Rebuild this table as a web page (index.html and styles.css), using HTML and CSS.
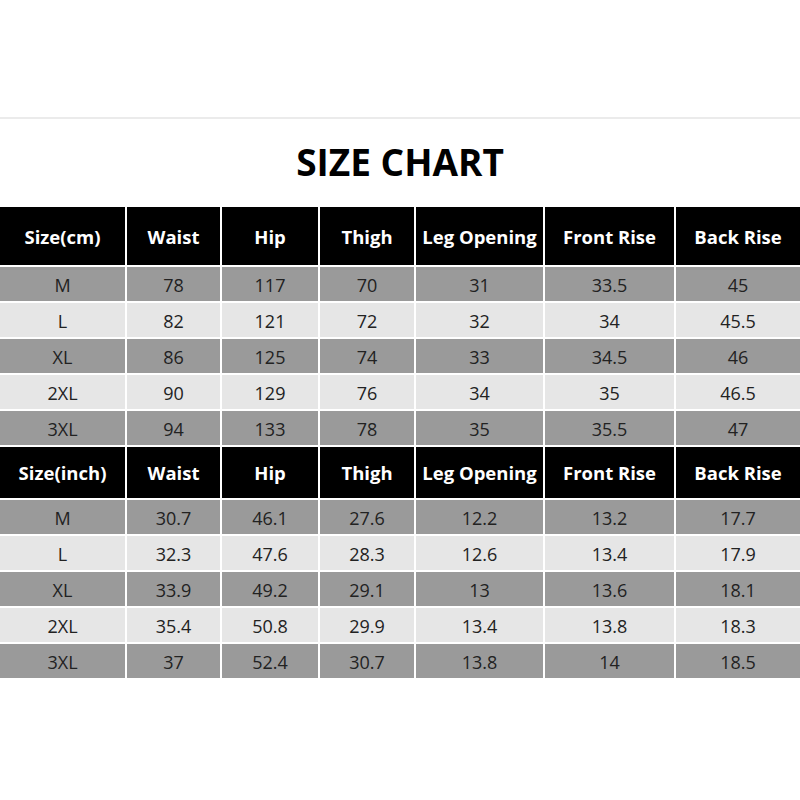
FILE: index.html
```html
<!DOCTYPE html>
<html>
<head>
<meta charset="utf-8">
<link rel="stylesheet" href="styles.css">
</head>
<body>
<div class="page">
  <div class="rule"></div>
  <h1 class="title">SIZE CHART</h1>
  <div class="chart">
    <div class="hd h1">Size(cm)</div><div class="hd h1">Waist</div><div class="hd h1">Hip</div><div class="hd h1">Thigh</div><div class="hd h1">Leg Opening</div><div class="hd h1">Front Rise</div><div class="hd h1">Back Rise</div>
    <div class="c dk">M</div><div class="c dk">78</div><div class="c dk">117</div><div class="c dk">70</div><div class="c dk">31</div><div class="c dk">33.5</div><div class="c dk">45</div>
    <div class="c lt">L</div><div class="c lt">82</div><div class="c lt">121</div><div class="c lt">72</div><div class="c lt">32</div><div class="c lt">34</div><div class="c lt">45.5</div>
    <div class="c dk">XL</div><div class="c dk">86</div><div class="c dk">125</div><div class="c dk">74</div><div class="c dk">33</div><div class="c dk">34.5</div><div class="c dk">46</div>
    <div class="c lt">2XL</div><div class="c lt">90</div><div class="c lt">129</div><div class="c lt">76</div><div class="c lt">34</div><div class="c lt">35</div><div class="c lt">46.5</div>
    <div class="c dk">3XL</div><div class="c dk">94</div><div class="c dk">133</div><div class="c dk">78</div><div class="c dk">35</div><div class="c dk">35.5</div><div class="c dk">47</div>
    <div class="hd">Size(inch)</div><div class="hd">Waist</div><div class="hd">Hip</div><div class="hd">Thigh</div><div class="hd">Leg Opening</div><div class="hd">Front Rise</div><div class="hd">Back Rise</div>
    <div class="c dk">M</div><div class="c dk">30.7</div><div class="c dk">46.1</div><div class="c dk">27.6</div><div class="c dk">12.2</div><div class="c dk">13.2</div><div class="c dk">17.7</div>
    <div class="c lt">L</div><div class="c lt">32.3</div><div class="c lt">47.6</div><div class="c lt">28.3</div><div class="c lt">12.6</div><div class="c lt">13.4</div><div class="c lt">17.9</div>
    <div class="c dk">XL</div><div class="c dk">33.9</div><div class="c dk">49.2</div><div class="c dk">29.1</div><div class="c dk">13</div><div class="c dk">13.6</div><div class="c dk">18.1</div>
    <div class="c lt">2XL</div><div class="c lt">35.4</div><div class="c lt">50.8</div><div class="c lt">29.9</div><div class="c lt">13.4</div><div class="c lt">13.8</div><div class="c lt">18.3</div>
    <div class="c dk">3XL</div><div class="c dk">37</div><div class="c dk">52.4</div><div class="c dk">30.7</div><div class="c dk">13.8</div><div class="c dk">14</div><div class="c dk">18.5</div>
  </div>
</div>
</body>
</html>
```

FILE: styles.css
```css
html, body {
  margin: 0;
  padding: 0;
  background: #ffffff;
}
.page {
  width: 800px;
  padding-top: 117px;
  font-family: "Open Sans", "Noto Sans", sans-serif;
}
.rule {
  height: 2px;
  background: #ebebeb;
}
.title {
  margin: 0;
  height: 88px;
  line-height: 86px;
  text-align: center;
  font-size: 37px;
  font-weight: 700;
  color: #000;
}
.chart {
  display: grid;
  grid-template-columns: 125px 93px 96px 94px 127px 129px 124px;
  grid-template-rows: 58px repeat(5, 34px) 51px repeat(5, 34px);
  gap: 2px;
}
.hd {
  background: #000;
  color: #fff;
  font-weight: 700;
  font-size: 18.5px;
  display: flex;
  align-items: center;
  justify-content: center;
  white-space: nowrap;
}
.c {
  display: flex;
  align-items: center;
  justify-content: center;
  padding-top: 2px;
  font-size: 18px;
  color: #222;
}
.dk { background: #9a9a9a; }
.lt { background: #e6e6e6; }
```
